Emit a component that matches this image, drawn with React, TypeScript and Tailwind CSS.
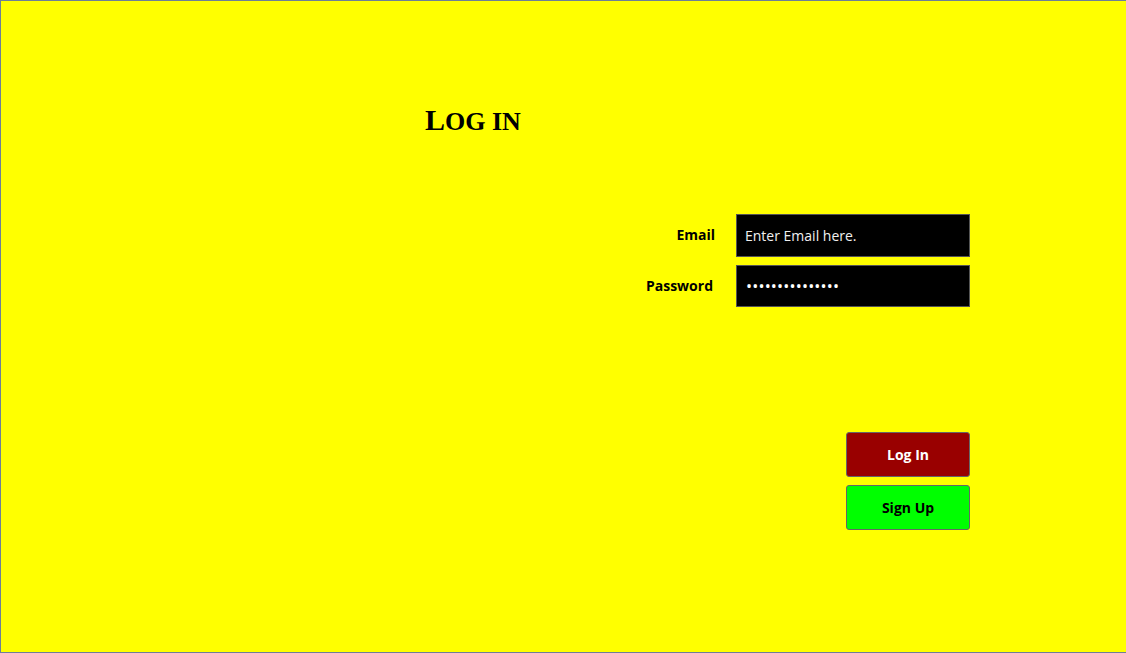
import React from "react";

export default function App() {
  const sans = { fontFamily: '"Open Sans", "Noto Sans", sans-serif' };
  return (
    <div
      className="w-[1126px] h-[653px] bg-[#ffff00] border-t border-l border-b border-[#6e7f96] flex flex-col"
      style={sans}
    >
      <div className="pl-[424px] pt-[104px] h-[213px]">
        <h1
          className="text-black font-bold leading-none"
          style={{ fontFamily: '"Liberation Serif", serif' }}
        >
          <span className="text-[30px]">L</span>
          <span className="text-[26px]">OG IN</span>
        </h1>
      </div>
      <div className="flex flex-col gap-[8px] items-end pr-[156px]">
        <div className="flex items-center">
          <label className="text-[14px] font-bold text-black pr-[21px] pb-[2px]">Email</label>
          <div className="w-[234px] h-[43px] bg-black border border-[#555555] flex items-center pl-[8px] pb-[1px]">
            <span className="text-[14px] text-[#f0f0f0]">Enter Email here.</span>
          </div>
        </div>
        <div className="flex items-center">
          <label className="text-[14px] font-bold text-black pr-[23px] pb-[2px]">Password</label>
          <div className="w-[234px] h-[42px] bg-black border border-[#555555] flex items-center pl-[9px]">
            <span className="text-[16px] text-white tracking-[0.2px]">•••••••••••••••</span>
          </div>
        </div>
      </div>
      <div className="flex flex-col items-end gap-[8px] pr-[156px] pt-[125px]">
        <button className="w-[124px] h-[45px] bg-[#990000] border border-[#666666] rounded-[3px] text-white font-bold text-[14px]">
          Log In
        </button>
        <button className="w-[124px] h-[45px] bg-[#00ff00] border border-[#666666] rounded-[3px] text-black font-bold text-[14px]">
          Sign Up
        </button>
      </div>
    </div>
  );
}
